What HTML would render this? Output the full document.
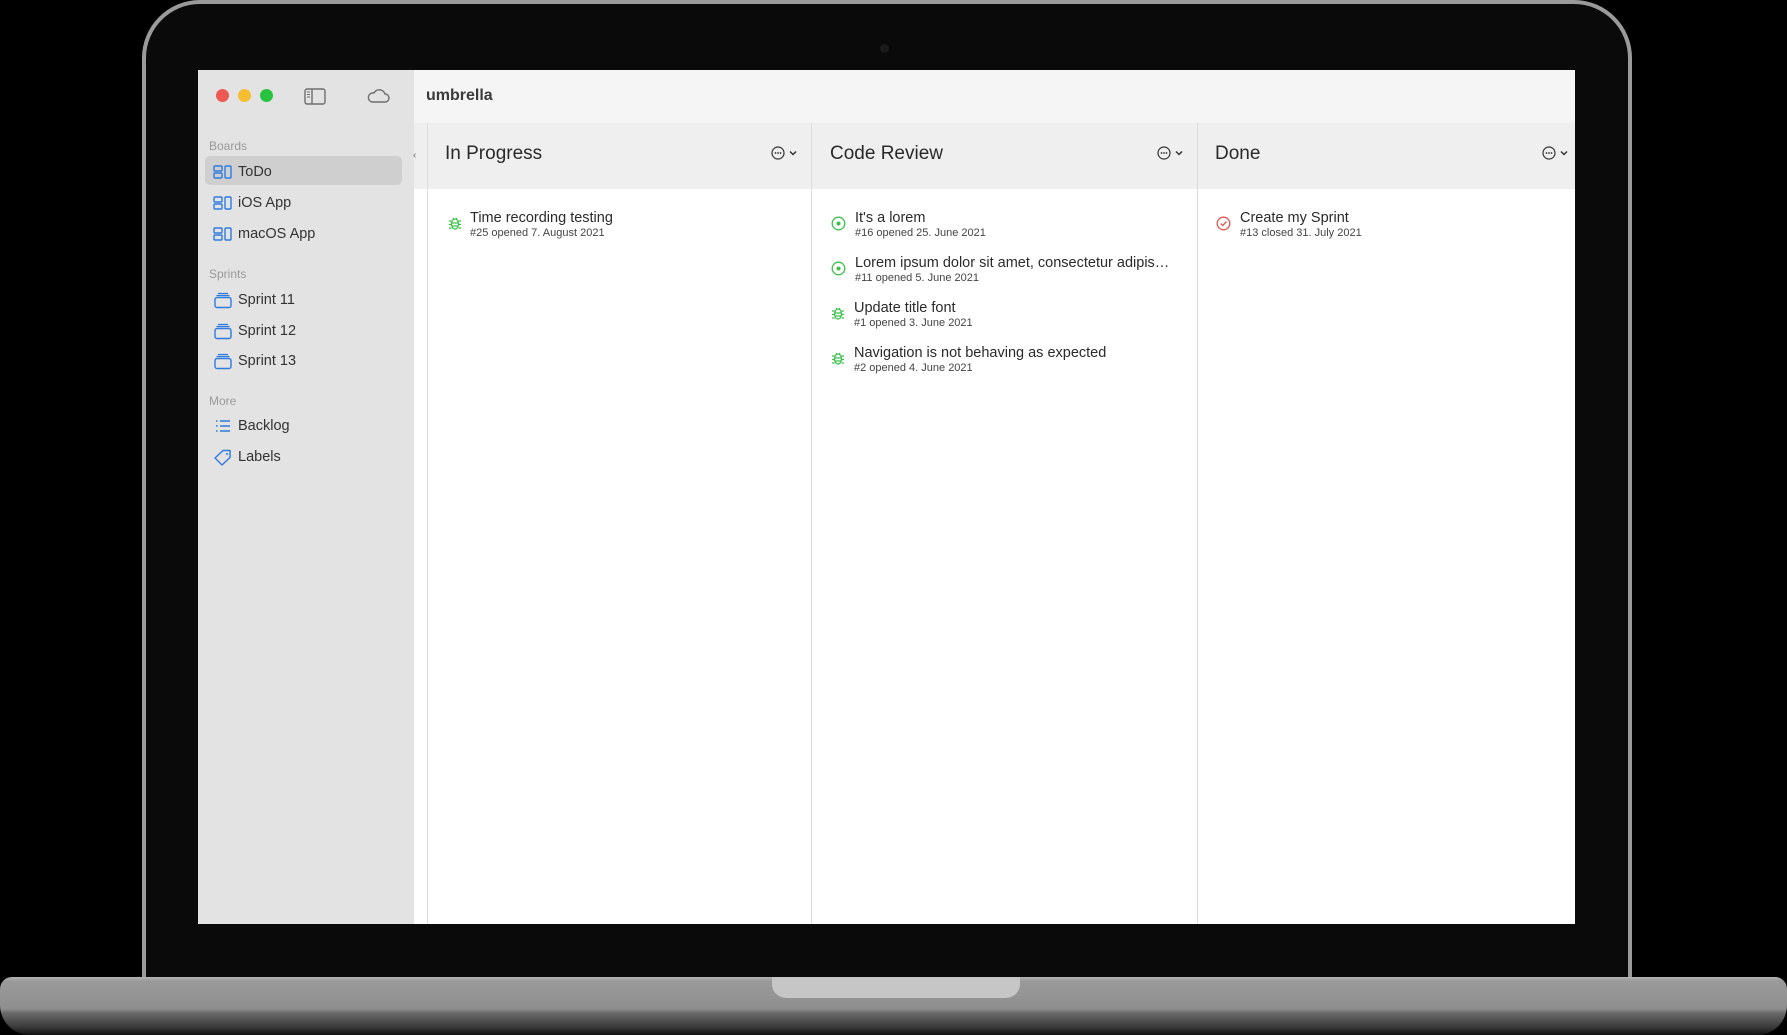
<!DOCTYPE html>
<html><head><meta charset="utf-8"><style>
*{margin:0;padding:0;box-sizing:border-box}
body{width:1787px;height:1035px;background:#000;position:relative;overflow:hidden;font-family:"Liberation Sans",sans-serif;color:#2a2a2a}
.abs{position:absolute}
.lid{left:142px;top:0;width:1490px;height:985px;border-radius:58px 58px 0 0;background:#0a0a0a;border:4px solid #9a9a9a;border-bottom:none}
.screen{left:198px;top:70px;width:1377px;height:854px;background:#fff;overflow:hidden}
.side{left:0;top:0;width:216px;height:854px;background:#e3e3e3}
.tb{left:216px;top:0;width:1161px;height:53px;background:#f5f5f5}
.hdr{top:53px;height:66px;background:#efefef}
.vl{top:53px;width:1px;height:801px;background:#dcdcdc}
.sec{font-size:12px;color:#9a9a9a;left:11px}
.item{left:0;font-size:14.5px;color:#333;height:20px;line-height:20px}
.item span{position:absolute;left:40px;top:0;white-space:nowrap}
.item svg{position:absolute;left:15px;top:2px}
.ch{font-size:19px;color:#2a2a2a}
.card{font-size:14.5px;color:#2a2a2a;white-space:nowrap}
.card .s{font-size:11px;color:#444;margin-top:1px}
.card svg{position:absolute;left:-18px;top:3px}
</style></head><body>
<div class="abs lid"></div>
<div class="abs" style="left:880px;top:44px;width:9px;height:9px;border-radius:50%;background:#1a1a1a"></div>
<div class="abs screen">
 <div class="abs side">
  <div class="abs" style="left:18px;top:19px;width:13px;height:13px;border-radius:50%;background:#ee5a52"></div>
  <div class="abs" style="left:40px;top:19px;width:13px;height:13px;border-radius:50%;background:#f5bd30"></div>
  <div class="abs" style="left:62px;top:19px;width:13px;height:13px;border-radius:50%;background:#27c23f"></div>
  <svg class="abs" style="left:106px;top:18px" width="22" height="17" viewBox="0 0 22 17"><rect x="1" y="1" width="20" height="15" rx="2" fill="none" stroke="#6e6e6e" stroke-width="1.4"/><line x1="8" y1="1" x2="8" y2="16" stroke="#6e6e6e" stroke-width="1.4"/><path d="M3 4h3M3 6.5h3M3 9h3" stroke="#6e6e6e" stroke-width="1"/></svg>
  <svg class="abs" style="left:168px;top:18px" width="24" height="16" viewBox="0 0 24 16"><path d="M6 14h13a4 4 0 0 0 0-8a6 6 0 0 0-11-1a4.5 4.5 0 0 0-2 9z" fill="none" stroke="#6e6e6e" stroke-width="1.4"/></svg>
  <div class="abs sec" style="top:69px">Boards</div>
  <div class="abs" style="left:7px;top:86px;width:197px;height:29px;border-radius:5px;background:#cfcfcf"></div>
  <div class="abs item" style="top:92px;width:216px"><svg width="20" height="16" viewBox="0 0 20 16"><rect x="1" y="2" width="8" height="5" rx="1" fill="none" stroke="#2f7be0" stroke-width="1.4"/><rect x="1" y="9" width="8" height="5" rx="1" fill="none" stroke="#2f7be0" stroke-width="1.4"/><rect x="12" y="2" width="6" height="12" rx="1" fill="none" stroke="#2f7be0" stroke-width="1.4"/></svg><span>ToDo</span></div>
  <div class="abs item" style="top:123px;width:216px"><svg width="20" height="16" viewBox="0 0 20 16"><rect x="1" y="2" width="8" height="5" rx="1" fill="none" stroke="#2f7be0" stroke-width="1.4"/><rect x="1" y="9" width="8" height="5" rx="1" fill="none" stroke="#2f7be0" stroke-width="1.4"/><rect x="12" y="2" width="6" height="12" rx="1" fill="none" stroke="#2f7be0" stroke-width="1.4"/></svg><span>iOS App</span></div>
  <div class="abs item" style="top:154px;width:216px"><svg width="20" height="16" viewBox="0 0 20 16"><rect x="1" y="2" width="8" height="5" rx="1" fill="none" stroke="#2f7be0" stroke-width="1.4"/><rect x="1" y="9" width="8" height="5" rx="1" fill="none" stroke="#2f7be0" stroke-width="1.4"/><rect x="12" y="2" width="6" height="12" rx="1" fill="none" stroke="#2f7be0" stroke-width="1.4"/></svg><span>macOS App</span></div>
  <div class="abs sec" style="top:197px">Sprints</div>
  <div class="abs item" style="top:220px;width:216px"><svg width="20" height="17" viewBox="0 0 20 17"><path d="M5 1.5h10M3.5 3.5h13" stroke="#2f7be0" stroke-width="1.2"/><rect x="2" y="5.5" width="16" height="10" rx="2" fill="none" stroke="#2f7be0" stroke-width="1.4"/></svg><span>Sprint 11</span></div>
  <div class="abs item" style="top:251px;width:216px"><svg width="20" height="17" viewBox="0 0 20 17"><path d="M5 1.5h10M3.5 3.5h13" stroke="#2f7be0" stroke-width="1.2"/><rect x="2" y="5.5" width="16" height="10" rx="2" fill="none" stroke="#2f7be0" stroke-width="1.4"/></svg><span>Sprint 12</span></div>
  <div class="abs item" style="top:281px;width:216px"><svg width="20" height="17" viewBox="0 0 20 17"><path d="M5 1.5h10M3.5 3.5h13" stroke="#2f7be0" stroke-width="1.2"/><rect x="2" y="5.5" width="16" height="10" rx="2" fill="none" stroke="#2f7be0" stroke-width="1.4"/></svg><span>Sprint 13</span></div>
  <div class="abs sec" style="top:324px">More</div>
  <div class="abs item" style="top:346px;width:216px"><svg width="20" height="16" viewBox="0 0 20 16"><path d="M3 3h1.5M3 8h1.5M3 13h1.5M7 3h10M7 8h10M7 13h10" stroke="#2f7be0" stroke-width="1.4"/></svg><span>Backlog</span></div>
  <div class="abs item" style="top:377px;width:216px"><svg width="20" height="17" viewBox="0 0 20 17"><path d="M10 1.5h7v7l-8 7.5-7-7z" fill="none" stroke="#2f7be0" stroke-width="1.4" stroke-linejoin="round"/><circle cx="14" cy="5" r="1" fill="#2f7be0"/></svg><span>Labels</span></div>
 </div>
 <div class="abs tb"><div class="abs" style="left:12px;top:17px;font-size:16px;font-weight:bold;color:#3a3a3a">umbrella</div></div>
 <div class="abs hdr" style="left:216px;width:1161px"></div>
 <div class="abs" style="left:215px;top:80px;font-size:10px;color:#666">‹</div>
 <div class="abs vl" style="left:229px"></div>
 <div class="abs vl" style="left:613px"></div>
 <div class="abs vl" style="left:999px"></div>

 <div class="abs ch" style="left:247px;top:73px">In Progress</div>
 <div class="abs ch" style="left:632px;top:73px">Code Review</div>
 <div class="abs ch" style="left:1017px;top:73px">Done</div>
 <svg class="abs" style="left:573px;top:75px" width="30" height="16" viewBox="0 0 30 16"><circle cx="7" cy="8" r="6" fill="none" stroke="#333" stroke-width="1.2"/><circle cx="4.5" cy="8" r=".9" fill="#333"/><circle cx="7" cy="8" r=".9" fill="#333"/><circle cx="9.5" cy="8" r=".9" fill="#333"/><path d="M19 6.5l3 3 3-3" fill="none" stroke="#333" stroke-width="1.5"/></svg>
 <svg class="abs" style="left:959px;top:75px" width="30" height="16" viewBox="0 0 30 16"><circle cx="7" cy="8" r="6" fill="none" stroke="#333" stroke-width="1.2"/><circle cx="4.5" cy="8" r=".9" fill="#333"/><circle cx="7" cy="8" r=".9" fill="#333"/><circle cx="9.5" cy="8" r=".9" fill="#333"/><path d="M19 6.5l3 3 3-3" fill="none" stroke="#333" stroke-width="1.5"/></svg>
 <svg class="abs" style="left:1344px;top:75px" width="30" height="16" viewBox="0 0 30 16"><circle cx="7" cy="8" r="6" fill="none" stroke="#333" stroke-width="1.2"/><circle cx="4.5" cy="8" r=".9" fill="#333"/><circle cx="7" cy="8" r=".9" fill="#333"/><circle cx="9.5" cy="8" r=".9" fill="#333"/><path d="M19 6.5l3 3 3-3" fill="none" stroke="#333" stroke-width="1.5"/></svg>

 <div class="abs card" style="left:272px;top:140px"><svg width="14" height="16" viewBox="0 0 14 16" style="left:-22px;top:5px"><g fill="none" stroke="#3cc04a" stroke-width="1.2"><ellipse cx="7" cy="9" rx="3.5" ry="5"/><path d="M3.5 8h7M3.5 11h7M5 3l1 1.5M9 3l-1 1.5M1 6h2.5M1 9.5h2.5M1 13h2.5M10.5 6H13M10.5 9.5H13M10.5 13H13"/></g></svg>Time recording testing<div class="s">#25 opened 7. August 2021</div></div>

 <div class="abs card" style="left:657px;top:140px"><svg width="15" height="15" viewBox="0 0 15 15" style="left:-24px;top:6px"><circle cx="7.5" cy="7.5" r="6.3" fill="none" stroke="#3cc04a" stroke-width="1.3"/><circle cx="7.5" cy="7.5" r="2" fill="#3cc04a"/></svg>It's a lorem<div class="s">#16 opened 25. June 2021</div></div>
 <div class="abs card" style="left:657px;top:185px"><svg width="15" height="15" viewBox="0 0 15 15" style="left:-24px;top:6px"><circle cx="7.5" cy="7.5" r="6.3" fill="none" stroke="#3cc04a" stroke-width="1.3"/><circle cx="7.5" cy="7.5" r="2" fill="#3cc04a"/></svg>Lorem ipsum dolor sit amet, consectetur adipis…<div class="s">#11 opened 5. June 2021</div></div>
 <div class="abs card" style="left:656px;top:230px"><svg width="14" height="16" viewBox="0 0 14 16" style="left:-23px;top:5px"><g fill="none" stroke="#3cc04a" stroke-width="1.2"><ellipse cx="7" cy="9" rx="3.5" ry="5"/><path d="M3.5 8h7M3.5 11h7M5 3l1 1.5M9 3l-1 1.5M1 6h2.5M1 9.5h2.5M1 13h2.5M10.5 6H13M10.5 9.5H13M10.5 13H13"/></g></svg>Update title font<div class="s">#1 opened 3. June 2021</div></div>
 <div class="abs card" style="left:656px;top:275px"><svg width="14" height="16" viewBox="0 0 14 16" style="left:-23px;top:5px"><g fill="none" stroke="#3cc04a" stroke-width="1.2"><ellipse cx="7" cy="9" rx="3.5" ry="5"/><path d="M3.5 8h7M3.5 11h7M5 3l1 1.5M9 3l-1 1.5M1 6h2.5M1 9.5h2.5M1 13h2.5M10.5 6H13M10.5 9.5H13M10.5 13H13"/></g></svg>Navigation is not behaving as expected<div class="s">#2 opened 4. June 2021</div></div>

 <div class="abs card" style="left:1042px;top:140px"><svg width="15" height="15" viewBox="0 0 15 15" style="left:-24px;top:6px"><circle cx="7.5" cy="7.5" r="6.3" fill="none" stroke="#e5534b" stroke-width="1.3"/><path d="M4.8 7.6l2 2 3.6-4" fill="none" stroke="#e5534b" stroke-width="1.3"/></svg>Create my Sprint<div class="s">#13 closed 31. July 2021</div></div>
</div>
<div class="abs" style="left:0;top:977px;width:1787px;height:58px;border-radius:12px 12px 30px 30px;background:linear-gradient(#b4b4b4 0px,#9a9a9a 4px,#8e8e8e 32px,#6a6a6a 36px,#3a3a3a 50px,#111 58px)"></div>
<div class="abs" style="left:772px;top:977px;width:248px;height:21px;border-radius:0 0 14px 14px;background:#c6c6c6"></div>
</body></html>
